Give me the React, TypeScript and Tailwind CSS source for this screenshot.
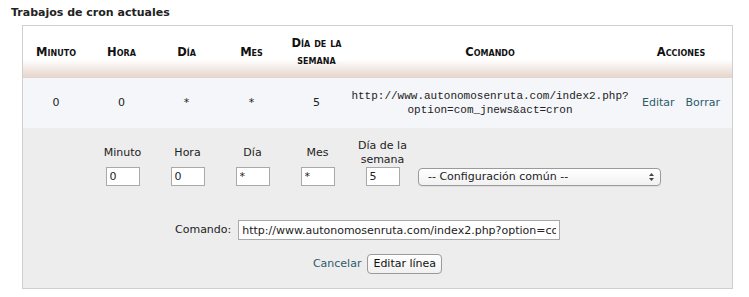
export default function App() {
  const font = 'font-["DejaVu_Sans",Verdana,sans-serif]'
  const cols = 'grid grid-cols-[66px_65px_65px_65px_65px_282px_100px]'
  const head = 'flex items-center justify-center text-center text-[11.5px] font-bold text-[#111] leading-[17px] [font-variant:small-caps]'
  const cell = 'flex items-center justify-center text-center text-[11px] text-[#222]'
  const fieldCols = ['Minuto', 'Hora', 'Día', 'Mes']
  const fieldVals = ['0', '0', '*', '*']

  return (
    <div className={`w-[749px] h-[297px] bg-white ${font}`}>
      <h2 className="pl-[11px] pt-[5px] text-[11px] font-bold text-[#222] leading-[15px]">Trabajos de cron actuales</h2>

      <div className="ml-[22px] mt-[5px] w-[711px] h-[264px] border border-[#cfcfcf]">
        {/* Header */}
        <div className={`${cols} h-[52px] bg-gradient-to-b from-white from-65% to-[#e4d3ca]`}>
          <div className={head}>Minuto</div>
          <div className={head}>Hora</div>
          <div className={head}>Día</div>
          <div className={head}>Mes</div>
          <div className={head}>Día de la<br />semana</div>
          <div className={head}>Comando</div>
          <div className={head}>Acciones</div>
        </div>

        {/* Current job */}
        <div className={`${cols} h-[50px] bg-[#f4f6f9]`}>
          <div className={cell}>0</div>
          <div className={cell}>0</div>
          <div className={cell}>*</div>
          <div className={cell}>*</div>
          <div className={cell}>5</div>
          <div className={`${cell} font-["Liberation_Mono",monospace] leading-[14px] text-[#111]`}>
            http://www.autonomosenruta.com/index2.php?<br />option=com_jnews&amp;act=cron
          </div>
          <div className="flex items-center justify-center gap-[11px] text-[11px] text-[#2f5a6b]">
            <a>Editar</a>
            <a>Borrar</a>
          </div>
        </div>

        {/* Edit form */}
        <div className="h-[160px] bg-[#ededed] pt-[11px]">
          <div className="flex pl-[67px]">
            {fieldCols.map((label, i) => (
              <div key={label} className="w-[65px] flex flex-col items-center">
                <div className="h-[28px] flex items-center text-[11px] text-[#222] leading-[14px]">{label}</div>
                <input
                  defaultValue={fieldVals[i]}
                  className="w-[34px] h-[19px] border border-[#a9a9a9] bg-white px-[3px] text-[11px] text-[#222] outline-none"
                />
              </div>
            ))}
            <div className="w-[65px] flex flex-col items-center">
              <div className="h-[28px] flex items-center text-center text-[11px] text-[#222] leading-[14px]">Día de la<br />semana</div>
              <input
                defaultValue="5"
                className="w-[34px] h-[19px] border border-[#a9a9a9] bg-white px-[3px] text-[11px] text-[#222] outline-none"
              />
            </div>
            <div className="flex flex-col ml-[3px]">
              <div className="h-[29px]" />
              <div className="w-[243px] h-[18px] flex items-center justify-between rounded-[4px] border border-[#9a9a9a] bg-gradient-to-b from-white to-[#f1f1f1] pl-[9px] pr-[5px] text-[11px] text-[#222] shadow-[0_1px_0_rgba(0,0,0,0.05)]">
                <span>-- Configuración común --</span>
                <svg width="7" height="10" viewBox="0 0 7 10">
                  <path d="M1 4 L3.5 1 L6 4 Z" fill="#444" />
                  <path d="M1 6 L3.5 9 L6 6 Z" fill="#444" />
                </svg>
              </div>
            </div>
          </div>

          <div className="flex items-center mt-[34px] pl-[152px]">
            <span className="text-[11px] text-[#222]">Comando:</span>
            <input
              defaultValue="http://www.autonomosenruta.com/index2.php?option=com_jnews&act=cron"
              className="ml-[7px] w-[322px] h-[20px] border border-[#a9a9a9] bg-white px-[3px] text-[11px] text-[#222] outline-none font-['DejaVu_Sans',Verdana,sans-serif]"
            />
          </div>

          <div className="flex items-center justify-center gap-[6px] mt-[14px]">
            <a className="text-[11px] text-[#2f5a6b]">Cancelar</a>
            <button className="h-[20px] px-[5px] rounded-[4px] border border-[#9a9a9a] bg-gradient-to-b from-white to-[#f0f0f0] text-[11px] text-[#111]">
              Editar línea
            </button>
          </div>
        </div>
      </div>
    </div>
  )
}
